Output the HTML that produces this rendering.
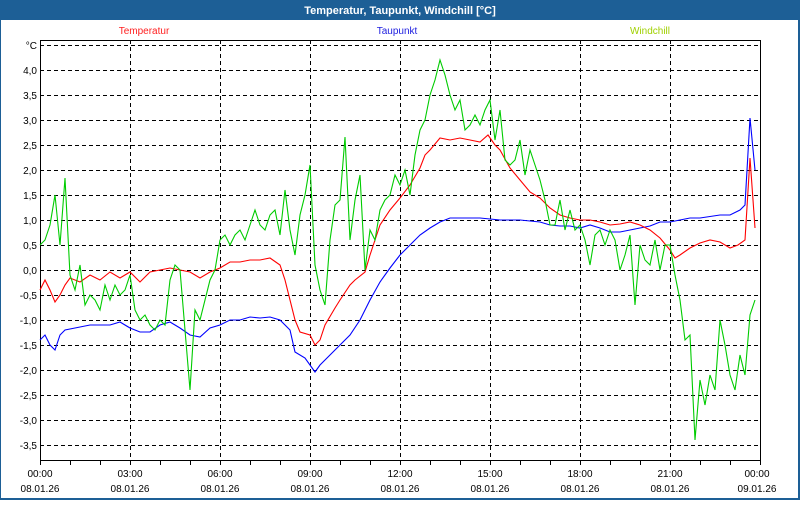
<!DOCTYPE html>
<html><head><style>
body{margin:0;width:800px;height:500px;overflow:hidden;background:#fff;font-family:"Liberation Sans","DejaVu Sans",sans-serif}
</style></head><body>
<svg width="800" height="500" xmlns="http://www.w3.org/2000/svg" font-family="Liberation Sans, DejaVu Sans, sans-serif" font-size="10">
<rect x="0" y="0" width="800" height="500" fill="#1d5f96"/>
<rect x="1" y="20" width="797" height="478" fill="#fff"/>
<text x="400" y="14" fill="#fff" font-weight="bold" font-size="11" text-anchor="middle">Temperatur, Taupunkt, Windchill [°C]</text>
<text x="144" y="34" fill="#ff2020" text-anchor="middle">Temperatur</text>
<text x="397" y="34" fill="#2020e0" text-anchor="middle">Taupunkt</text>
<text x="650" y="34" fill="#a0d000" text-anchor="middle">Windchill</text>
<g stroke="#000" stroke-width="1" stroke-dasharray="4,3" fill="none">
<path d="M40 45.5H760M40 70.5H760M40 95.5H760M40 120.5H760M40 145.5H760M40 170.5H760M40 195.5H760M40 220.5H760M40 245.5H760M40 270.5H760M40 295.5H760M40 320.5H760M40 345.5H760M40 370.5H760M40 395.5H760M40 420.5H760M40 445.5H760"/>
<path d="M130.5 40V460M220.5 40V460M310.5 40V460M400.5 40V460M490.5 40V460M580.5 40V460M670.5 40V460"/>
</g>
<rect x="40.5" y="40.5" width="720" height="420" fill="none" stroke="#000"/>
<path d="M70.5 461v4M100.5 461v4M130.5 461v4M160.5 461v4M190.5 461v4M220.5 461v4M250.5 461v4M280.5 461v4M310.5 461v4M340.5 461v4M370.5 461v4M400.5 461v4M430.5 461v4M460.5 461v4M490.5 461v4M520.5 461v4M550.5 461v4M580.5 461v4M610.5 461v4M640.5 461v4M670.5 461v4M700.5 461v4M730.5 461v4M760.5 461v4M40.5 461v4" stroke="#000"/>
<g text-anchor="end" fill="#000">
<text x="37" y="49">°C</text><text x="37" y="74">4,0</text><text x="37" y="99">3,5</text><text x="37" y="124">3,0</text><text x="37" y="149">2,5</text><text x="37" y="174">2,0</text><text x="37" y="199">1,5</text><text x="37" y="224">1,0</text><text x="37" y="249">0,5</text><text x="37" y="274">0,0</text><text x="37" y="299">-0,5</text><text x="37" y="324">-1,0</text><text x="37" y="349">-1,5</text><text x="37" y="374">-2,0</text><text x="37" y="399">-2,5</text><text x="37" y="424">-3,0</text><text x="37" y="449">-3,5</text>
</g>
<g text-anchor="middle" fill="#000">
<text x="40" y="477">00:00</text><text x="40" y="492">08.01.26</text>
<text x="130" y="477">03:00</text><text x="130" y="492">08.01.26</text>
<text x="220" y="477">06:00</text><text x="220" y="492">08.01.26</text>
<text x="310" y="477">09:00</text><text x="310" y="492">08.01.26</text>
<text x="400" y="477">12:00</text><text x="400" y="492">08.01.26</text>
<text x="490" y="477">15:00</text><text x="490" y="492">08.01.26</text>
<text x="580" y="477">18:00</text><text x="580" y="492">08.01.26</text>
<text x="670" y="477">21:00</text><text x="670" y="492">08.01.26</text>
<text x="757" y="477">00:00</text><text x="757" y="492">09.01.26</text>
</g>
<g fill="none" stroke-width="1.1">
<polyline stroke="#0000ff" points="40,340 45,335 50,345 55,350 60,335 65,330 75,328 90,325 100,325 110,325 120,322 130,328 140,332 150,332 160,325 170,322 180,328 190,335 200,337 210,328 220,325 230,320 240,320 250,317 260,318 270,317 280,320 290,330 295,352 305,358 315,372 320,365 330,355 340,345 350,335 360,320 370,300 380,282 390,268 400,255 410,245 420,235 430,228 440,222 450,218 460,218 480,218 500,220 520,220 540,222 550,225 560,226 570,226 580,228 590,225 600,228 610,232 620,232 630,230 640,228 650,226 660,222 670,222 680,220 690,218 700,218 720,215 730,215 740,210 745,205 750,118 755,170"/>
<polyline stroke="#ff0000" points="40,290 45,280 50,290 55,302 60,295 65,285 70,278 80,282 90,275 100,280 110,272 120,278 130,272 140,282 150,272 160,270 170,268 180,270 190,272 200,278 210,272 220,268 230,262 240,262 250,260 260,260 270,258 280,265 285,280 290,300 295,320 300,332 310,335 315,345 320,340 325,325 335,308 340,300 350,285 355,280 365,272 370,255 375,240 380,225 390,210 400,198 410,185 420,168 425,155 430,150 440,138 450,140 460,138 470,140 480,142 488,135 495,145 500,150 510,168 520,180 530,192 540,198 550,208 560,215 570,218 580,220 590,220 600,222 610,225 620,224 630,222 640,225 650,230 660,238 670,250 675,258 680,255 690,248 700,243 710,240 720,242 730,248 738,245 745,240 750,158 755,228"/>
<polyline stroke="#00cc00" points="40,245 45,240 50,225 55,195 60,245 65,178 70,275 75,290 80,265 85,305 90,295 95,300 100,310 105,285 110,300 115,285 120,295 125,290 130,275 135,310 140,320 145,315 150,325 155,330 160,320 165,325 170,280 175,265 180,270 185,330 190,390 195,310 200,320 205,300 210,280 215,270 220,240 225,235 230,245 235,235 240,230 245,240 250,225 255,210 260,225 265,230 270,215 275,210 280,235 285,190 290,230 295,255 300,215 305,195 310,165 315,265 320,290 325,305 330,240 335,205 340,200 345,137 350,240 355,200 360,175 365,270 370,230 375,240 380,210 385,200 390,195 395,175 400,185 405,170 410,195 415,155 420,130 425,120 430,95 435,80 440,60 445,75 450,95 455,110 460,100 465,130 470,125 475,115 480,125 485,110 490,100 495,140 500,110 505,160 510,165 515,160 520,140 525,175 530,150 535,165 540,180 545,200 550,225 555,225 560,200 565,230 570,210 575,230 580,225 585,240 590,265 595,235 600,230 605,245 610,230 615,240 620,270 625,255 630,235 635,305 640,245 645,260 650,265 655,240 660,270 665,245 670,245 675,275 680,300 685,340 690,335 695,440 700,380 705,405 710,375 715,390 720,320 725,345 730,375 735,390 740,355 745,375 750,315 755,300"/>
</g>
</svg>
</body></html>
